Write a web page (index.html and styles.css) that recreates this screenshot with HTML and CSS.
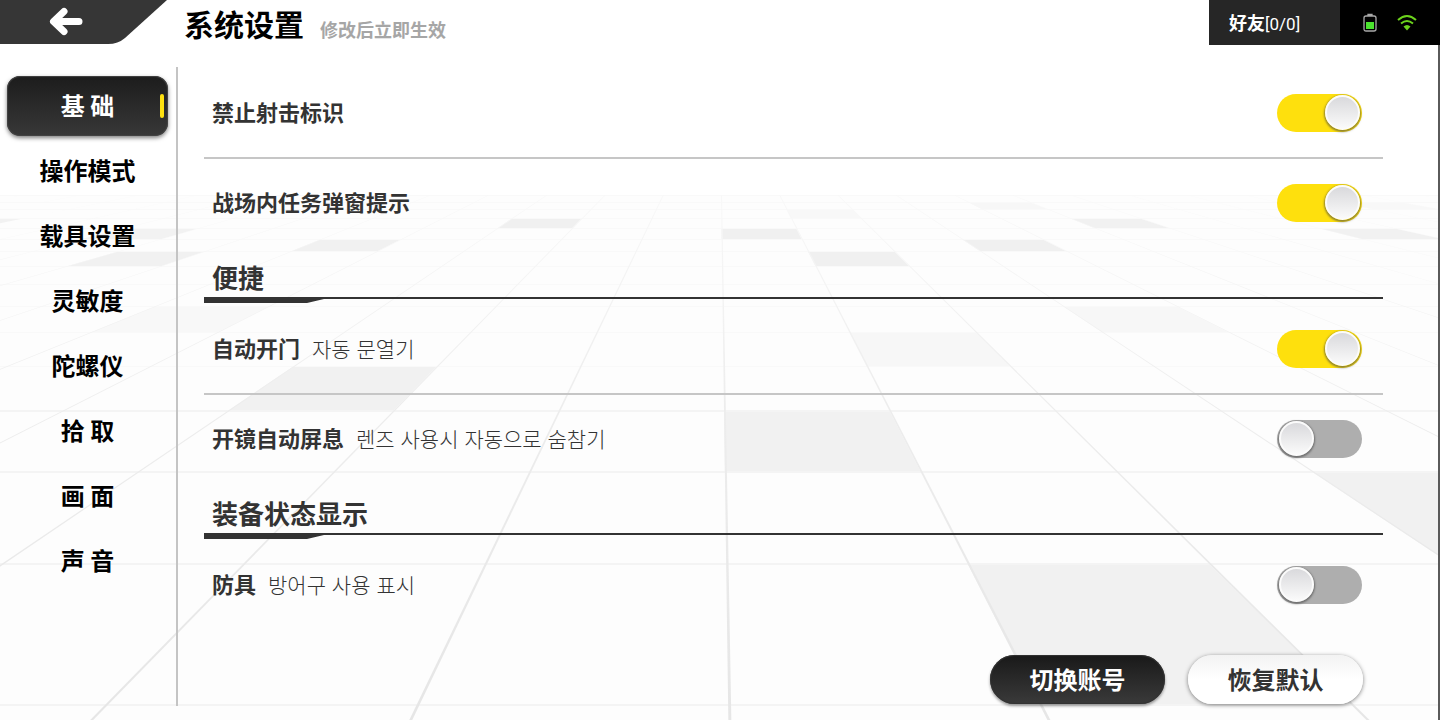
FILE: index.html
```html
<!DOCTYPE html>
<html lang="zh-CN">

<head>
    <meta charset="UTF-8">
    <meta name="viewport" content="width=device-width, initial-scale=1.0">
    <title>系统设置</title>
    <link rel="stylesheet" href="styles.css">
</head>

<body>
    <svg class="floor" id="floor" viewBox="0 0 1440 720" preserveAspectRatio="none" aria-hidden="true">
        <defs>
            <linearGradient id="fade" gradientUnits="userSpaceOnUse" x1="0" y1="195" x2="0" y2="720">
                <stop offset="0" stop-color="#f8f8f8" />
                <stop offset="0.4" stop-color="#ededed" />
                <stop offset="1" stop-color="#e6e6e6" />
            </linearGradient>
        </defs>
        <rect x="0" y="195" width="1440" height="525" fill="#fdfdfd" />
    </svg>

    <header class="header">
        <button class="back" type="button" aria-label="返回">
            <svg width="168" height="44" viewBox="0 0 168 44">
                <path d="M0 0H167L125 38Q118 44 108 44H0Z" fill="#363636" />
                <path d="M79 21.500H54M64 11.500L53.500 21.500L64 31.500" fill="none" stroke="#fff" stroke-width="7" stroke-linecap="round" stroke-linejoin="round" />
            </svg>
        </button>
        <h1 class="title">系统设置</h1>
        <p class="subtitle">修改后立即生效</p>
        <button class="friends" type="button">好友<span class="count">[0/0]</span></button>
        <div class="status">
            <svg width="14" height="20" viewBox="0 0 14 20">
                <path d="M5 3V1.500H9V3M3 3H11Q13 3 13 5V16Q13 18 11 18H3Q1 18 1 16V5Q1 3 3 3Z" fill="none" stroke="#a9a9a9" stroke-width="1.300" />
                <rect x="3" y="9" width="8" height="7" fill="#4be32e" />
            </svg>
            <svg width="20" height="18" viewBox="0 0 20 18">
                <g fill="none" stroke="#6cd31c" stroke-width="2">
                    <path d="M1 6Q10 -2 19 6" />
                    <path d="M4 9.500Q10 4.500 16 9.500" />
                </g>
                <path d="M6.500 12.500Q10 9.500 13.500 12.500L10 16.500Z" fill="#6cd31c" />
            </svg>
        </div>
    </header>

    <div class="page">
        <nav class="nav">
            <button class="nav-item on" type="button">基 础</button>
            <button class="nav-item" type="button">操作模式</button>
            <button class="nav-item" type="button">载具设置</button>
            <button class="nav-item" type="button">灵敏度</button>
            <button class="nav-item" type="button">陀螺仪</button>
            <button class="nav-item" type="button">拾 取</button>
            <button class="nav-item" type="button">画 面</button>
            <button class="nav-item" type="button">声 音</button>
        </nav>

        <main class="main">
            <div class="row line">
                <label for="noShoot">禁止射击标识</label>
                <input class="switch" type="checkbox" id="noShoot" checked>
            </div>
            <div class="row">
                <label for="taskTip">战场内任务弹窗提示</label>
                <input class="switch" type="checkbox" id="taskTip" checked>
            </div>

            <h2 class="heading">便捷</h2>
            <div class="row line">
                <label for="autoDoor">自动开门<span class="note" lang="ko">자동 문열기</span></label>
                <input class="switch" type="checkbox" id="autoDoor" checked>
            </div>
            <div class="row">
                <label for="autoBreath">开镜自动屏息<span class="note" lang="ko">렌즈 사용시 자동으로 숨참기</span></label>
                <input class="switch" type="checkbox" id="autoBreath">
            </div>

            <h2 class="heading">装备状态显示</h2>
            <div class="row">
                <label for="armor">防具<span class="note" lang="ko">방어구 사용 표시</span></label>
                <input class="switch" type="checkbox" id="armor">
            </div>

            <div class="actions">
                <button class="btn dark" type="button">切换账号</button>
                <button class="btn" type="button">恢复默认</button>
            </div>
        </main>
    </div>
    <script src="floor.js"></script>
</body>

</html>
```

FILE: styles.css
```css
* {
    margin: 0;
    padding: 0;
    box-sizing: border-box;
}

body {
    position: relative;
    min-height: 100vh;
    overflow-x: hidden;
    background-color: #fff;
    color: #000;
    font-family: "Noto Sans CJK SC", sans-serif;
    font-weight: bold;
}

button {
    border: none;
    background: none;
    font: inherit;
    cursor: pointer;
}

/* 背景地板 */
.floor {
    position: absolute;
    z-index: -1;
    left: 0;
    top: 0;
    width: 100%;
    height: 100%;
}

/* 顶栏 */
.header {
    display: flex;
    height: 45px;
}

.back svg,
.status svg {
    display: block;
}

.back {
    align-self: flex-start;
}

.title {
    margin-left: 16px;
    font-size: 30px;
    line-height: 46px;
}

.subtitle {
    margin-left: 16px;
    flex: 1;
    font-size: 18px;
    line-height: 58px;
    color: #a6a6a6;
}

.friends {
    width: 131px;
    padding-left: 20px;
    background-color: #262626;
    color: #fff;
    font-size: 18px;
    line-height: 44px;
    text-align: left;
}

.count {
    font-family: Roboto, sans-serif;
    font-size: 17px;
    font-weight: 400;
}

.status {
    display: flex;
    align-items: center;
    justify-content: center;
    gap: 20px;
    width: 100px;
    background-color: #000;
}

/* 主体 */
.page {
    display: flex;
    min-height: calc(100vh - 45px);
    border-right: 2px solid #5a5a5a;
}

.nav {
    display: flex;
    flex-direction: column;
    gap: 5px;
    width: 178px;
    margin: 22px 0 14px;
    padding: 9px 8px 0 7px;
    border-right: 2px solid #c4c4c4;
}

.nav-item {
    position: relative;
    height: 60px;
    padding-bottom: 4px;
    border-radius: 13px;
    font-size: 24px;
}

.nav-item.on {
    background: linear-gradient(#1c1c1c, #383838);
    box-shadow: 0 2px 4px rgba(0, 0, 0, 0.5), inset 0 0 1px 1px #444;
    color: #fff;
}

.nav-item.on::after {
    content: "";
    position: absolute;
    right: 4px;
    top: 18px;
    width: 4px;
    height: 24px;
    border-radius: 2px;
    background-color: #fde010;
}

.main {
    flex: 1;
    padding: 24px 55px 16px 26px;
    color: #333;
}

.row {
    display: flex;
    align-items: center;
    justify-content: space-between;
    height: 88px;
    padding: 0 21px 0 8px;
    font-size: 22px;
}

.row.line {
    height: 90px;
    border-bottom: 2px solid #c6c6c6;
}

.row label {
    padding-bottom: 4px;
}

.note {
    margin-left: 12px;
    font-family: "Noto Sans CJK KR", sans-serif;
    font-size: 21px;
    font-weight: 300;
    line-height: 1;
}

.heading {
    padding: 12px 0 4px;
    font-size: 26px;
    line-height: 36px;
    text-indent: 8px;
}

.heading::after {
    content: "";
    display: block;
    height: 6px;
    margin-top: 2px;
    margin-bottom: -2px;
    background-color: #333;
    clip-path: polygon(0 0, 100% 0, 100% 2px, 120px 2px, 103px 100%, 0 100%);
}

/* 开关 */
.switch {
    -webkit-appearance: none;
    appearance: none;
    width: 85px;
    height: 38px;
    padding: 1px 2px;
    border-radius: 19px;
    background-color: #aeaeae;
    cursor: pointer;
}

.switch::before {
    content: "";
    display: block;
    box-sizing: border-box;
    width: 35px;
    height: 35px;
    border: 2px solid #fbfbfb;
    border-radius: 50%;
    background: linear-gradient(#d9d9dc, #fafafa);
    box-shadow: 0 1px 2px 1px rgba(70, 70, 70, 0.6);
}

.switch:checked {
    background-color: #fee00d;
}

.switch:checked::before {
    margin-left: auto;
}

/* 底部按钮 */
.actions {
    display: flex;
    justify-content: flex-end;
    gap: 23px;
    margin-top: 26px;
    padding-right: 20px;
}

.btn {
    width: 175px;
    height: 49px;
    padding-bottom: 2px;
    border-radius: 25px;
    background: linear-gradient(#f3f3f3, #fff 50%);
    box-shadow: 0 1px 4px rgba(0, 0, 0, 0.5);
    color: #333;
    font-size: 24px;
}

.btn.dark {
    background: linear-gradient(#191919, #3a3a3a);
    box-shadow: 0 2px 3px rgba(0, 0, 0, 0.4), inset 0 0 1px 1px #333;
    color: #fff;
}
```

FILE: floor.js
```js
// 画透视地板：所有竖线汇聚于 y = 78 的地平线
let floor = document.getElementById('floor');
let rows = [195, 202, 209, 218, 228, 239, 251, 266, 284, 306, 332, 366, 410, 471, 563, 704];

// 第 k 条竖线在高度 y 处的横坐标
function lineX(k, y) {
    return 721 + (y - 195) * 0.014 + k * (y - 78) * 0.497;
}

function add(name, attrs) {
    let el = document.createElementNS('http://www.w3.org/2000/svg', name);
    for (let key in attrs) {
        el.setAttribute(key, attrs[key]);
    }
    floor.appendChild(el);
}

// 深色地砖：[列, 行, 颜色]
let tiles = [
    [10, 1, '#f8f8f8'], [4, 1, '#f7f7f7'], [1, 2, '#f8f8f8'],
    [-11, 3, '#f2f2f2'], [-3, 3, '#f0f0f0'], [5, 3, '#f1f1f1'],
    [-8, 4, '#f2f2f2'], [0, 4, '#f0f0f0'], [8, 4, '#f1f1f1'],
    [-5, 5, '#f1f1f1'], [3, 5, '#f0f0f0'],
    [-7, 6, '#f1f1f1'], [1, 6, '#f0f0f0'],
    [-5, 9, '#f8f8f8'], [3, 9, '#f7f7f7'], [1, 10, '#f7f7f7'],
    [-3, 11, '#f1f1f1'], [0, 12, '#f1f1f1'],
    [3, 13, '#f1f1f1'], [1, 14, '#f1f1f1']
];
tiles.forEach(([k, r, color]) => {
    let top = rows[r], bottom = rows[r + 1];
    add('polygon', {
        points: [
            lineX(k, top), top, lineX(k + 1, top), top,
            lineX(k + 1, bottom), bottom, lineX(k, bottom), bottom
        ].join(' '),
        fill: color
    });
});

rows.forEach((y) => {
    add('rect', { x: 0, y: y, width: 1440, height: y > 400 ? 2 : 1, fill: y > 400 ? '#f4f4f4' : '#f9f9f9' });
});

// 竖线越近越粗
for (let k = -13; k <= 13; k++) {
    let top = lineX(k, 195), bottom = lineX(k, 720);
    add('polygon', {
        points: [top, 195, top + 1, 195, bottom + 3, 720, bottom, 720].join(' '),
        fill: 'url(#fade)'
    });
}
```
